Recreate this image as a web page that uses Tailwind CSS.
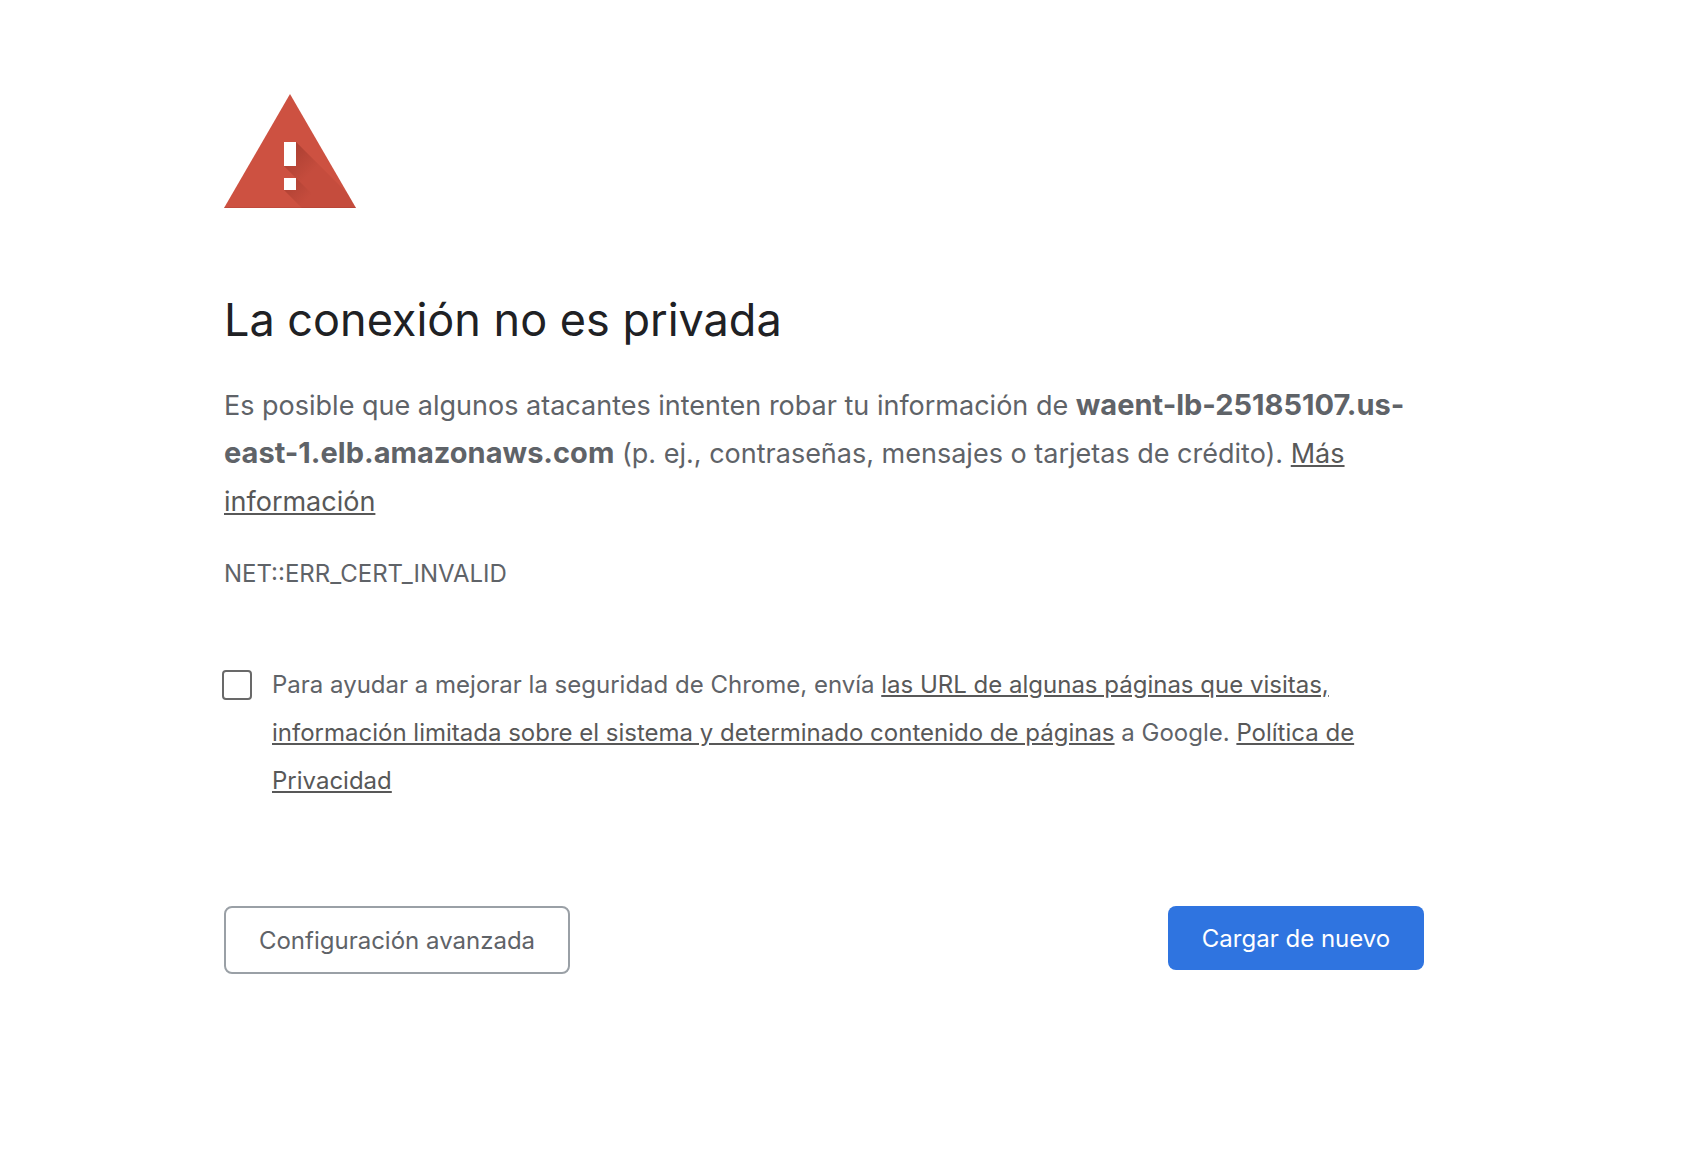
<!DOCTYPE html>
<html lang="es">
<head>
  <meta charset="UTF-8" />
  <meta name="viewport" content="width=device-width, initial-scale=1.0" />
  <title>Error de privacidad</title>
  <script src="https://cdn.jsdelivr.net/npm/@tailwindcss/browser@4"></script>
</head>
<body class="bg-white min-h-screen text-[#5f6368] font-['Inter','Liberation_Sans',sans-serif]">
  <div class="pr-[50px]">
    <main class="max-w-[1200px] mx-auto pt-[94px] pb-16">

      <!-- Warning icon -->
      <svg class="block w-[132px] h-[114px]" viewBox="0 0 132 114" aria-hidden="true">
        <defs>
          <linearGradient id="barShade" gradientUnits="userSpaceOnUse" x1="64" y1="58" x2="86" y2="80">
            <stop offset="0" stop-color="#7f2a20" stop-opacity="0.36" />
            <stop offset="1" stop-color="#7f2a20" stop-opacity="0" />
          </linearGradient>
          <linearGradient id="dotShade" gradientUnits="userSpaceOnUse" x1="64" y1="88" x2="82" y2="106">
            <stop offset="0" stop-color="#7f2a20" stop-opacity="0.3" />
            <stop offset="1" stop-color="#7f2a20" stop-opacity="0" />
          </linearGradient>
          <clipPath id="triangle"><path d="M66 0L132 114H0Z" /></clipPath>
        </defs>
        <path d="M66 0L132 114H0Z" fill="#cd5141" />
        <g clip-path="url(#triangle)">
          <path d="M72 48L138 114H78L60 96L72 84L60 72Z" fill="#7f2a20" fill-opacity="0.1" />
          <path d="M72 48L138 114H102L60 72Z" fill="url(#barShade)" />
          <path d="M72 84L102 114H78L60 96Z" fill="url(#dotShade)" />
          <path d="M0 113H132V114H0Z" fill="#7f2a20" fill-opacity="0.15" />
        </g>
        <path d="M60 48H72V72H60ZM60 84H72V96H60Z" fill="#fff" />
      </svg>

      <!-- Message -->
      <h1 class="mt-[84px] text-[45px] leading-[56px] text-[#202124]">La conexión no es privada</h1>
      <p class="mt-[34px] text-[27px] leading-[48px]">
        Es posible que algunos atacantes intenten robar tu información de
        <strong class="font-bold text-[29px] leading-none">waent-lb-25185107.us-east-1.elb.amazonaws.com</strong>
        (p. ej., contraseñas, mensajes o tarjetas de crédito).
        <a href="#" class="underline text-[#585858]">Más información</a>
      </p>
      <p class="mt-6 text-[24px] leading-[48px]">NET::ERR_CERT_INVALID</p>

      <!-- Reporting opt-in -->
      <div class="mt-[63px] -ml-0.5 flex items-start gap-5 text-[24px] leading-[48px]">
        <input id="optIn" type="checkbox" class="appearance-none shrink-0 size-[30px] mt-[9px] rounded-[4px] border-2 border-[#696969] bg-white checked:bg-[#2f74e0]" />
        <label for="optIn">
          Para ayudar a mejorar la seguridad de Chrome, envía
          <a href="#" class="underline text-[#585858]">las URL de algunas páginas que visitas, información limitada sobre el sistema y determinado contenido de páginas</a>
          a Google.
          <a href="#" class="underline text-[#585858]">Política de Privacidad</a>
        </label>
      </div>

      <!-- Buttons -->
      <div class="mt-[101px] flex items-start justify-between text-[24px]">
        <button id="details" class="h-[68px] w-[346px] pt-0.5 rounded-lg border-2 border-[#9aa0a6]">Configuración avanzada</button>
        <button id="reload" class="h-16 w-64 pt-0.5 rounded-lg bg-[#2f74e0] text-white">Cargar de nuevo</button>
      </div>
    </main>
  </div>

  <script>
    document.getElementById("reload").addEventListener("click", () => location.reload());
  </script>
</body>
</html>
